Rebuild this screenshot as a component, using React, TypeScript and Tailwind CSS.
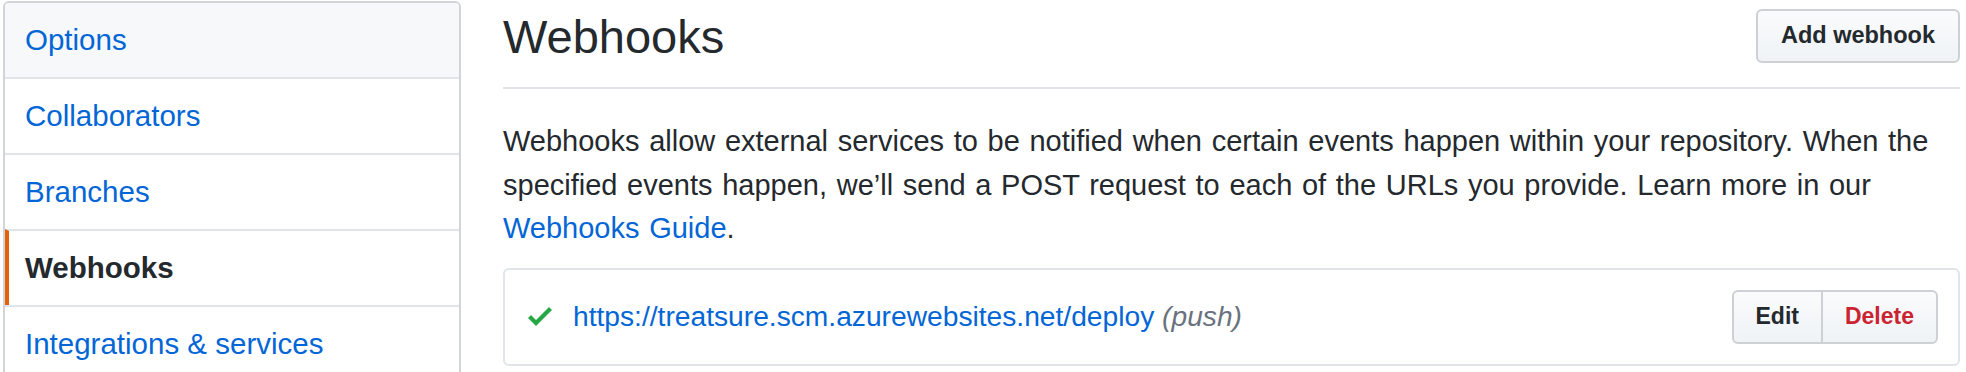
const menu = [
  { label: "Options", hover: true },
  { label: "Collaborators" },
  { label: "Branches" },
  { label: "Webhooks", selected: true },
  { label: "Integrations & services" },
];

function SideItem({ label, selected, hover, first }: { label: string; selected?: boolean; hover?: boolean; first?: boolean }) {
  const edge = first ? "h-[74px]" : "h-[76px] border-t-2 border-t-[#e1e4e8]";
  if (selected) {
    return (
      <div className={`flex items-center border-l-4 border-l-[#e36209] pl-[16px] text-[29.5px] font-bold text-[#24292e] ${edge}`}>
        {label}
      </div>
    );
  }
  return (
    <div className={`flex items-center pl-[20px] text-[29.5px] text-[#0366d6] ${hover ? "bg-[#f6f8fa]" : "bg-white"} ${edge}`}>
      {label}
    </div>
  );
}

export default function App() {
  return (
    <div className="h-[372px] overflow-hidden bg-white font-['Liberation_Sans',Arial,sans-serif] text-[#24292e]">
      <div className="flex pl-[3px] pr-[6px] pt-[1px]">
        <nav className="w-[458px] shrink-0 self-start overflow-hidden rounded-[6px] border-2 border-[#d1d5da]">
          {menu.map((m, i) => (
            <SideItem key={m.label} label={m.label} selected={m.selected} hover={m.hover} first={i === 0} />
          ))}
        </nav>

        <main className="ml-[42px] flex-1">
          <div className="flex items-center justify-between border-b-2 border-[#e1e4e8] pb-[24px] pt-[8px]">
            <h2 className="text-[47px] font-normal leading-none">Webhooks</h2>
            <button className="h-[54px] rounded-[6px] border-2 border-[#cdd1d5] bg-gradient-to-b from-[#fafbfc] to-[#eff3f6] px-[23px] text-[23.5px] font-bold text-[#24292e]">
              Add webhook
            </button>
          </div>

          <p className="mt-[31px] text-[29px] leading-[43.5px] [word-spacing:1.6px]">
            Webhooks allow external services to be notified when certain events happen within your repository. When the
            specified events happen, we’ll send a POST request to each of the URLs you provide. Learn more in our{" "}
            <a className="text-[#0366d6]">Webhooks Guide</a>.
          </p>

          <div className="mt-[17px] flex items-center justify-between rounded-[6px] border-2 border-[#e1e4e8] py-[20px] pl-[23px] pr-[20px]">
            <div className="flex items-center gap-[21px] text-[28.2px]">
              <svg width="24" height="32" viewBox="0 0 12 16" className="fill-[#28a745]">
                <path d="M12 5l-8 8-4-4 1.5-1.5L4 10l6.5-6.5L12 5z" />
              </svg>
              <span>
                <a className="text-[#0366d6]">https://treatsure.scm.azurewebsites.net/deploy</a>{" "}
                <em className="text-[#6a737d]">(push)</em>
              </span>
            </div>
            <div className="flex h-[54px] text-[23px] font-bold">
              <button className="rounded-l-[6px] border-2 border-[#cdd1d5] bg-gradient-to-b from-[#fafbfc] to-[#eff3f6] px-[22px] text-[#24292e]">
                Edit
              </button>
              <button className="-ml-[2px] rounded-r-[6px] border-2 border-[#cdd1d5] bg-gradient-to-b from-[#fafbfc] to-[#eff3f6] px-[22px] text-[#cb2431]">
                Delete
              </button>
            </div>
          </div>
        </main>
      </div>
    </div>
  );
}
